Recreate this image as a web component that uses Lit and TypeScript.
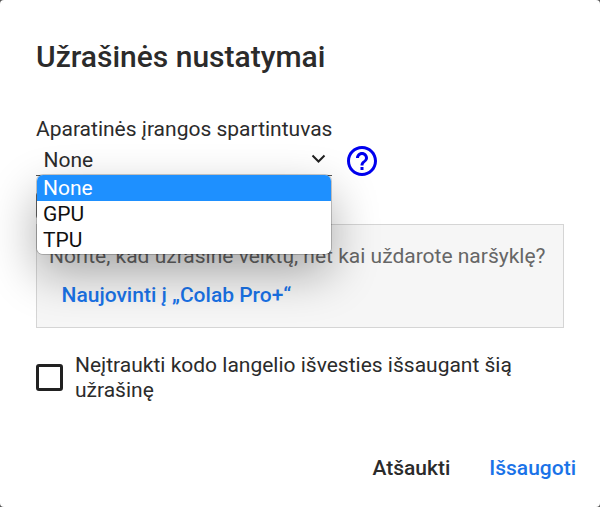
import { LitElement, html, css } from "lit";
import { customElement, state } from "lit/decorators.js";
import { classMap } from "lit/directives/class-map.js";

@customElement("app-root")
export class AppRoot extends LitElement {
  static styles = css`
    :host {
      display: block;
      height: 507px;
      background: #555;
      font-family: Roboto, "Noto Sans", sans-serif;
      font-size: 21px;
      line-height: 25px;
      color: #2b2b2b;
    }
    * { box-sizing: border-box; }
    .dialog {
      height: 507px;
      padding: 39px 24px 0 36px;
      background: #fff;
      border-radius: 4px;
      overflow: hidden;
      display: flex;
      flex-direction: column;
    }
    h2 {
      margin: 0;
      font-size: 30px;
      line-height: 36px;
      font-weight: 500;
      color: #2b2b2b;
      white-space: nowrap;
    }
    .label { margin-top: 42px; white-space: nowrap; height: 25px; }
    .row { display: flex; gap: 15px; height: 34px; }
    .select {
      position: relative;
      width: 296px;
      height: 34px;
      padding: 6px 6.5px 0 7.5px;
      border-bottom: 1px solid #555;
      display: flex;
      justify-content: space-between;
    }
    .chevron { width: 15px; height: 10px; margin-top: 6px; }
    .help { width: 30px; height: 30px; margin-top: 4px; }
    .menu {
      position: absolute;
      z-index: 2;
      top: 33px;
      left: 1px;
      width: 294px;
      height: 79px;
      background: #fff;
      border-radius: 6px;
      overflow: hidden;
      color: #101010;
    }
    .shade {
      position: absolute;
      z-index: 1;
      top: 33px;
      left: 1px;
      width: 294px;
      height: 79px;
      border-radius: 6px;
      box-shadow: 0 0 0 1px rgba(0, 0, 0, 0.2), 0 19px 48px rgba(0, 0, 0, 0.33);
    }
    .option { height: 26px; line-height: 26px; padding-left: 6px; }
    .option.active { background: #1e90ff; color: #fff; }
    .stub { margin-top: 16px; width: 27px; height: 27px; border: 1px solid #777; border-radius: 3px; flex: none; }
    .promo {
      margin-top: 5px;
      width: 528px;
      height: 104px;
      flex: none;
      border: 1px solid #d5d5d5;
      background: #f6f6f6;
      padding: 19px 12px 0;
      color: #666;
      white-space: nowrap;
    }
    .promo a {
      display: block;
      margin: 14px 0 0 12.5px;
      color: #1a73e8;
      font-weight: 500;
    }
    .omit { display: flex; gap: 12px; align-items: flex-start; margin-top: 25px; width: 528px; height: 50px; }
    .omit p { margin: 0; }
    .box { flex: none; width: 27px; height: 27px; margin-top: 11px; border: 3px solid #212121; border-radius: 3px; }
    .actions { display: flex; justify-content: flex-end; gap: 39px; margin-top: 53px; font-weight: 500; }
    .save { color: #1a73e8; }
  `;

  @state() private selected = "None";
  private options = ["None", "GPU", "TPU"];

  render() {
    return html`
      <div class="dialog">
        <h2>Užrašinės nustatymai</h2>
        <div class="label">Aparatinės įrangos spartintuvas</div>
        <div class="row">
          <div class="select">
            <span>${this.selected}</span>
            <svg class="chevron" viewBox="0 0 15 10">
              <path d="M1.500 1.500 7.500 7.500 13.500 1.500" fill="none" stroke="#212121" stroke-width="2" />
            </svg>
            <div class="shade"></div>
            <div class="menu">
              ${this.options.map(
                (o) => html`<div
                  class=${classMap({ option: true, active: o === this.selected })}
                  @click=${() => (this.selected = o)}
                >${o}</div>`
              )}
            </div>
          </div>
          <svg class="help" viewBox="2 2 20 20">
            <path
              fill="#0000ee"
              d="M11 18h2v-2h-2v2zm1-16C6.480 2 2 6.480 2 12s4.480 10 10 10 10-4.480 10-10S17.520 2 12 2zm0 18c-4.410 0-8-3.590-8-8s3.590-8 8-8 8 3.590 8 8-3.590 8-8 8zm0-14c-2.210 0-4 1.790-4 4h2c0-1.100.9-2 2-2s2 .9 2 2c0 2-3 1.750-3 5h2c0-2.250 3-2.500 3-5 0-2.210-1.790-4-4-4z"
            />
          </svg>
        </div>
        <div class="stub"></div>
        <div class="promo">
          <span>Norite, kad užrašinė veiktų, net kai uždarote naršyklę?</span>
          <a>Naujovinti į „Colab Pro+“</a>
        </div>
        <div class="omit">
          <div class="box"></div>
          <p>Neįtraukti kodo langelio išvesties išsaugant šią<br />užrašinę</p>
        </div>
        <div class="actions">
          <span>Atšaukti</span>
          <span class="save">Išsaugoti</span>
        </div>
      </div>
    `;
  }
}
